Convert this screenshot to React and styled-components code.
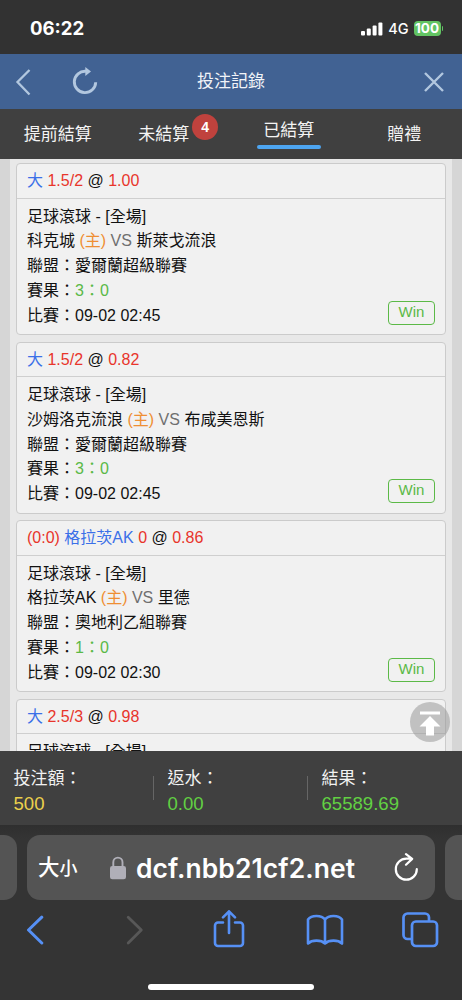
import React from "react";
import styled, { createGlobalStyle } from "styled-components";

const GlobalStyle = createGlobalStyle`
  * {
    box-sizing: border-box;
  }
  body {
    margin: 0;
    background: #343434;
    font-family: "Liberation Sans", "Noto Sans CJK TC", sans-serif;
  }
  svg {
    display: block;
    flex: none;
  }
`;

const Screen = styled.div`
  width: 462px;
  height: 1000px;
  display: flex;
  flex-direction: column;
  overflow: hidden;
`;

const StatusBar = styled.div`
  height: 54px;
  flex: none;
  padding: 3px 19px 0 30px;
  display: flex;
  align-items: center;
  justify-content: space-between;
  background: #323232;
  color: #fff;
  font-family: Inter, sans-serif;
`;

const Time = styled.span`
  margin-bottom: 1px;
  font-size: 18.6px;
  font-weight: 700;
  line-height: 24px;
`;

const StatusRight = styled.div`
  display: flex;
  align-items: center;
`;

const Network = styled.span`
  margin: 1px 5px 0 5px;
  font-size: 14.5px;
  font-weight: 500;
  line-height: 20px;
`;

const Battery = styled.span`
  width: 27px;
  height: 15px;
  border-radius: 4px;
  background: #62c463;
  font-size: 13.5px;
  font-weight: 700;
  line-height: 15px;
  text-align: center;
`;

const BatteryTip = styled.span`
  width: 1.5px;
  height: 5px;
  margin-left: 1px;
  border-radius: 0 2px 2px 0;
  background: #62c463;
`;

const Header = styled.div`
  height: 55px;
  flex: none;
  display: grid;
  grid-template-columns: 115px 1fr 115px;
  align-items: center;
  background: #416293;
`;

const HeaderLeft = styled.div`
  padding-left: 15px;
  display: flex;
  align-items: center;
  gap: 41px;
`;

const HeaderRight = styled.div`
  padding-right: 17px;
  display: flex;
  justify-content: flex-end;
`;

const Title = styled.h1`
  margin: 0;
  padding-top: 1px;
  font-size: 17px;
  font-weight: 400;
  line-height: 24px;
  text-align: center;
  color: #f1f4f8;
`;

const Tabs = styled.div`
  height: 50px;
  flex: none;
  display: grid;
  grid-template-columns: repeat(4, 1fr);
  background: #404040;
`;

const Tab = styled.div`
  display: flex;
  flex-direction: ${(p) => (p.$active ? "column" : "row")};
  align-items: ${(p) => (p.$active ? "center" : "flex-start")};
  justify-content: ${(p) => (p.$active ? "flex-start" : "center")};
  padding-top: ${(p) => (p.$active ? "10px" : "14px")};
  padding-left: ${(p) => (p.$badge ? "10px" : "0")};
  font-size: 17px;
  line-height: 24px;
  color: #f4f4f4;
`;

const Underline = styled.span`
  width: 64px;
  height: 4px;
  margin-top: 2px;
  border-radius: 2px;
  background: #4da5f1;
`;

const Badge = styled.span`
  width: 26px;
  height: 26px;
  margin: -9px 0 0 3px;
  border-radius: 50%;
  background: #c0423d;
  color: #fff;
  font-size: 14px;
  font-weight: 700;
  line-height: 26px;
  text-align: center;
`;

const ListArea = styled.div`
  position: relative;
  height: 592px;
  flex: none;
  padding: 0 10px;
  overflow: hidden;
  background: #d6d6d6;
`;

const List = styled.div`
  padding: 4px 6px 0;
  display: flex;
  flex-direction: column;
  gap: 6.5px;
  background: #e8e8e8;
`;

const Card = styled.div`
  height: 172px;
  flex: none;
  border: 1px solid #cbcbcb;
  border-radius: 4px;
  background: #f1f1f1;
  font-size: 16px;
  color: #111;
`;

const CardHead = styled.div`
  height: 34.5px;
  padding: 0 10px;
  border-bottom: 1px solid #cfcfcf;
  line-height: 34.5px;
  white-space: pre;
`;

const CardBody = styled.div`
  display: flex;
  justify-content: space-between;
  align-items: flex-end;
  padding: 6.3px 10px 0;
`;

const Lines = styled.div`
  line-height: 24.7px;
`;

const Line = styled.div`
  height: 24.7px;
  white-space: pre;
`;

const tones = {
  red: "#e8352b",
  blue: "#3b70e8",
  orange: "#ef8e33",
  gray: "#6f6f6f",
  green: "#5ab947",
};

const Tone = styled.span`
  color: ${(p) => tones[p.$c]};
`;

const Win = styled.span`
  width: 47px;
  height: 24px;
  margin-bottom: 3.3px;
  border: 1.5px solid #5bb947;
  border-radius: 4px;
  color: #5bb947;
  font-size: 15px;
  line-height: 20px;
  text-align: center;
`;

const TopButton = styled.div`
  position: absolute;
  right: 12px;
  bottom: 9px;
  width: 40px;
  height: 40px;
  border-radius: 50%;
  background: rgba(150, 150, 150, 0.52);
`;

const Summary = styled.div`
  height: 74px;
  flex: none;
  display: grid;
  grid-template-columns: repeat(3, 1fr);
  background: #404040;
`;

const SummaryItem = styled.div`
  display: flex;
  align-items: flex-start;
  padding-top: 15px;
`;

const SummaryText = styled.div`
  flex: 1;
  padding-left: 13.5px;
`;

const Label = styled.div`
  font-size: 17px;
  line-height: 26px;
  color: #f2f2f2;
`;

const Value = styled.div`
  font-size: 18.6px;
  line-height: 24px;
  color: ${(p) => p.$color};
`;

const Divider = styled.span`
  width: 1px;
  height: 24px;
  margin-top: 10px;
  background: #666;
`;

const Browser = styled.div`
  height: 175px;
  flex: none;
  display: flex;
  flex-direction: column;
  align-items: center;
  background: linear-gradient(#2f2f2f, #343434 14px);
`;

const AddressRow = styled.div`
  width: 462px;
  height: 65px;
  margin-top: 10px;
  display: grid;
  grid-template-columns: 17px 408px 17px;
  gap: 10px;
`;

const SideTab = styled.div`
  border-radius: ${(p) => (p.$left ? "0 13px 13px 0" : "13px 0 0 13px")};
  background: #545454;
`;

const AddressBar = styled.div`
  padding: 0 15px 0 11px;
  display: flex;
  align-items: center;
  border-radius: 13px;
  background: #545454;
  color: #fff;
`;

const TextSize = styled.span`
  width: 71px;
  padding-top: 2px;
  font-size: 21.5px;
  font-weight: 500;
  line-height: 30px;
  white-space: nowrap;
  small {
    font-size: 18px;
  }
`;

const Url = styled.span`
  flex: 1;
  margin-left: 9px;
  font-family: Inter, sans-serif;
  font-size: 26.4px;
  font-weight: 600;
  line-height: 34px;
  letter-spacing: 0.12px;
  white-space: nowrap;
`;

const Toolbar = styled.div`
  width: 462px;
  height: 59px;
  display: grid;
  grid-template-columns: 70px 130px 58px 133px 59px;
  align-items: center;
  justify-items: center;
`;

const HomeIndicator = styled.div`
  width: 166px;
  height: 6px;
  margin-top: 25px;
  border-radius: 3px;
  background: #fff;
`;

const bets = [
  {
    pick: "大",
    line: "1.5/2",
    odds: "1.00",
    home: "科克城",
    away: "斯萊戈流浪",
    league: "愛爾蘭超級聯賽",
    score: "3：0",
    time: "09-02 02:45",
  },
  {
    pick: "大",
    line: "1.5/2",
    odds: "0.82",
    home: "沙姆洛克流浪",
    away: "布咸美恩斯",
    league: "愛爾蘭超級聯賽",
    score: "3：0",
    time: "09-02 02:45",
  },
  {
    current: "(0:0)",
    pick: "格拉茨AK",
    line: "0",
    odds: "0.86",
    home: "格拉茨AK",
    away: "里德",
    league: "奧地利乙組聯賽",
    score: "1：0",
    time: "09-02 02:30",
  },
  {
    pick: "大",
    line: "2.5/3",
    odds: "0.98",
  },
];

const totals = [
  { label: "投注額：", value: "500", color: "#ecd14c" },
  { label: "返水：", value: "0.00", color: "#62d043" },
  { label: "結果：", value: "65589.69", color: "#62d043" },
];

const Bet = ({ bet }) => {
  return (
    <Card>
      <CardHead>
        {bet.current && <Tone $c="red">{bet.current} </Tone>}
        <Tone $c="blue">{bet.pick}</Tone> <Tone $c="red">{bet.line}</Tone> @{" "}
        <Tone $c="red">{bet.odds}</Tone>
      </CardHead>
      <CardBody>
        <Lines>
          <Line>足球滾球 - [全場]</Line>
          {bet.home && (
            <>
              <Line>
                {bet.home} <Tone $c="orange">(主)</Tone>{" "}
                <Tone $c="gray">VS</Tone> {bet.away}
              </Line>
              <Line>聯盟：{bet.league}</Line>
              <Line>
                賽果：<Tone $c="green">{bet.score}</Tone>
              </Line>
              <Line>比賽：{bet.time}</Line>
            </>
          )}
        </Lines>
        {bet.home && <Win>Win</Win>}
      </CardBody>
    </Card>
  );
};

const App = () => {
  return (
    <Screen>
      <GlobalStyle />
      <StatusBar>
        <Time>06:22</Time>
        <StatusRight>
          <svg width="22" height="14" viewBox="0 0 22 14" fill="#fff">
            <rect x="0" y="9" width="4" height="4.5" rx="1" />
            <rect x="5.8" y="6.5" width="4" height="7" rx="1" />
            <rect x="11.6" y="3.5" width="4" height="10" rx="1" />
            <rect x="17.4" y="0.5" width="4" height="13" rx="1" />
          </svg>
          <Network>4G</Network>
          <Battery>100</Battery>
          <BatteryTip />
        </StatusRight>
      </StatusBar>

      <Header>
        <HeaderLeft>
          <svg width="16" height="28" viewBox="0 0 16 28" fill="none">
            <path d="M14.5 2 2.5 14l12 12.5" stroke="#b2c7df" strokeWidth="2.3" />
          </svg>
          <svg width="28" height="30" viewBox="0 -2 28 30" fill="none">
            <path
              d="M23.7 13.2A10.7 10.7 0 1 1 14 2.3"
              stroke="#b2c7df"
              strokeWidth="2.9"
            />
            <path d="M13.3-2v9L19 2.5Z" fill="#b2c7df" />
          </svg>
        </HeaderLeft>
        <Title>投注記錄</Title>
        <HeaderRight>
          <svg width="22" height="22" viewBox="0 0 22 22" fill="none">
            <path d="m2 2 18 18M20 2 2 20" stroke="#b2c7df" strokeWidth="2.4" />
          </svg>
        </HeaderRight>
      </Header>

      <Tabs>
        <Tab>提前結算</Tab>
        <Tab $badge>
          未結算<Badge>4</Badge>
        </Tab>
        <Tab $active>
          已結算
          <Underline />
        </Tab>
        <Tab>贈禮</Tab>
      </Tabs>

      <ListArea>
        <List>
          {bets.map((bet, i) => (
            <Bet key={i} bet={bet} />
          ))}
        </List>
        <TopButton>
          <svg width="40" height="40" viewBox="0 0 40 40" fill="#fff">
            <path d="M10 9.5h20v3H10zM20 14 30.5 24.5H24v9h-8v-9H9.5Z" />
          </svg>
        </TopButton>
      </ListArea>

      <Summary>
        {totals.map((t, i) => (
          <SummaryItem key={t.label}>
            <SummaryText>
              <Label>{t.label}</Label>
              <Value $color={t.color}>{t.value}</Value>
            </SummaryText>
            {i < 2 && <Divider />}
          </SummaryItem>
        ))}
      </Summary>

      <Browser>
        <AddressRow>
          <SideTab $left />
          <AddressBar>
            <TextSize>
              大<small>小</small>
            </TextSize>
            <svg width="18" height="24" viewBox="0 0 18 24" fill="none">
              <path
                d="M4.3 11V6.2a4.6 4.6 0 0 1 9.2 0V11"
                stroke="#b0afb8"
                strokeWidth="1.9"
              />
              <rect x="1" y="10" width="16" height="13.3" rx="2.3" fill="#b0afb8" />
            </svg>
            <Url>dcf.nbb21cf2.net</Url>
            <svg width="26" height="30" viewBox="0 0 26 30" fill="none">
              <path
                d="M22.8 16.2A10.5 10.5 0 1 1 12.3 5.7h5.5M12 1.2l6.2 4.7L12 11.7"
                stroke="#fff"
                strokeWidth="2.2"
                strokeLinecap="round"
                strokeLinejoin="round"
              />
            </svg>
          </AddressBar>
          <SideTab />
        </AddressRow>
        <Toolbar>
          <svg width="20" height="30" viewBox="0 0 20 30" fill="none">
            <path
              d="M16.8 2.2 3.5 15l13.3 13"
              stroke="#5690f5"
              strokeWidth="3"
              strokeLinecap="round"
              strokeLinejoin="round"
            />
          </svg>
          <svg width="20" height="30" viewBox="0 0 20 30" fill="none">
            <path
              d="M3.2 2.2 16.3 15 3.2 28"
              stroke="#585858"
              strokeWidth="2.8"
              strokeLinecap="round"
              strokeLinejoin="round"
            />
          </svg>
          <svg width="32" height="40" viewBox="0 1 32 40" fill="none">
            <path
              d="M10 13.5H5a3 3 0 0 0-3 3V34a3 3 0 0 0 3 3h22a3 3 0 0 0 3-3V16.5a3 3 0 0 0-3-3h-5M16 24V2.5M10 8.3l6-6 6 6"
              stroke="#5690f5"
              strokeWidth="2.6"
              strokeLinecap="round"
              strokeLinejoin="round"
            />
          </svg>
          <svg width="38" height="32" viewBox="0 0 38 32" fill="none">
            <path
              d="M19 5.5C15.500 1 5.500 .8 2 5.500V29.500c4-3.800 13-3.800 17 0 4-3.800 13-3.800 17 0V5.500C32.500 .8 22.500 1 19 5.500ZM19 5.500V29.500"
              stroke="#5690f5"
              strokeWidth="2.6"
              strokeLinejoin="round"
            />
          </svg>
          <svg width="37" height="36" viewBox="0 0 37 36" fill="none">
            <path
              d="M9.5 27H5.500a4 4 0 0 1-4-4V5.500a4 4 0 0 1 4-4H23a4 4 0 0 1 4 4V9"
              stroke="#5690f5"
              strokeWidth="2.7"
            />
            <rect
              x="10"
              y="9.5"
              width="25"
              height="24.5"
              rx="3.8"
              stroke="#5690f5"
              strokeWidth="2.7"
            />
          </svg>
        </Toolbar>
        <HomeIndicator />
      </Browser>
    </Screen>
  );
};

export default App;
